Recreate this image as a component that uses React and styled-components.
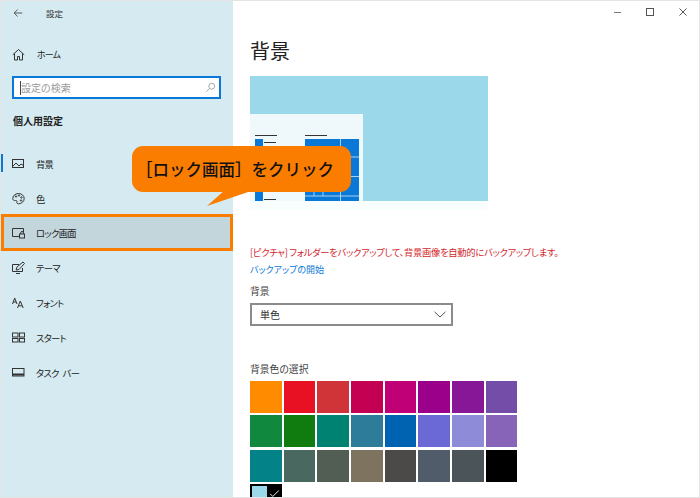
import React from "react";
import styled, { createGlobalStyle } from "styled-components";

const Global = createGlobalStyle`
  html, body { margin: 0; padding: 0; background: #fff; }
  body { font-family: "Noto Sans CJK JP", "Noto Sans", sans-serif; font-feature-settings: "palt"; }
  * { box-sizing: border-box; }
`;
const Window = styled.div`
  position: relative; width: 700px; height: 498px; overflow: hidden; background: #fff;
  border: 1px solid #e4e4e4; display: flex; color: #2b2b2b;
`;
const Sidebar = styled.aside`
  width: 232px; flex: none; background: #d5eaf1; display: flex; flex-direction: column;
`;
const TitleBar = styled.div`
  height: 23px; display: flex; align-items: center; padding-left: 12px; gap: 23px; font-size: 8.5px; color: #333;
`;
const HomeRow = styled.div`
  margin-top: 19px; height: 22px; display: flex; align-items: center; gap: 12px; padding-left: 11px; font-size: 9px;
  letter-spacing: -0.9px; color: #222;
`;
const SearchBox = styled.div`
  margin: 11px 0 0 11px; width: 209px; height: 23px; background: #fff; border: 2px solid #0a78d7;
  display: flex; align-items: center; justify-content: space-between; padding: 0 3px 0 6px; font-size: 10px; color: #9a9a9a;
  span { border-left: 1px solid #444; line-height: 14px; }
`;
const GroupTitle = styled.div`
  margin: 13px 0 16px 12px; height: 18px; line-height: 18px; font-size: 10px; font-weight: 700; color: #222;
`;
const NavList = styled.nav`
  display: flex; flex-direction: column;
`;
const NavRow = styled.div`
  position: relative; flex: none; height: ${p => (p.$hi ? 37 : 35)}px; margin: ${p => (p.$hi ? "-2px 0 -1px" : "0")};
  display: flex; align-items: center; gap: 11px; padding-left: ${p => (p.$hi ? 8 : 11)}px; font-size: 9.3px;
  letter-spacing: -0.7px; word-spacing: 2.5px; color: #222;
  background: ${p => (p.$hi ? "#c2d6dc" : "transparent")};
  border: ${p => (p.$hi ? "3px solid #fb7d00" : "0")};
  ${p => p.$current && `&::before { content: ""; position: absolute; left: 0; top: 8px; width: 2px; height: 18px; background: #0a78d7; }`}
`;
const Main = styled.main`
  flex: 1; padding: 30px 0 0 17px; display: flex; flex-direction: column; align-items: flex-start; min-width: 0;
  & > * { flex: none; }
`;
const WinControls = styled.div`
  position: absolute; top: 6px; right: 11px; display: flex; gap: 23px; align-items: center;
`;
const Heading = styled.h1`
  margin: -1px 0 0; font-size: 20px; font-weight: 400; line-height: 42px; height: 46px; color: #222;
`;
const Preview = styled.svg`
  display: block; width: 238px; height: 134px;
`;
const Warning = styled.p`
  margin: 34px 0 0; font-size: 9.3px; letter-spacing: -0.3px; line-height: 16px; color: #d3272c; white-space: nowrap;
`;
const LinkText = styled.a`
  margin-top: 2px; font-size: 9px; line-height: 16px; color: #0a78d7;
`;
const FieldLabel = styled.div`
  font-size: 9.8px; line-height: 16px; color: #444; margin-top: ${p => p.$top}px;
`;
const Select = styled.div`
  margin-top: 4px; width: 203px; height: 23px; border: 2px solid #8b8b8b; display: flex; align-items: center;
  justify-content: space-between; padding: 0 5px 0 8px; font-size: 10px; color: #333;
`;
const Swatches = styled.div`
  margin-top: 4px; display: grid; grid-template-columns: repeat(8, 31.5px); grid-auto-rows: 32.1px; gap: 2.2px;
`;
const Swatch = styled.div`
  background: ${p => p.$c};
`;
const SelectedSwatch = styled.div`
  background: #000; padding: 2px; display: grid; grid-template-columns: 15px 1fr;
  i { display: block; height: 100%; background: #9bd9ea; }
  svg { margin: 3px 0 0 2px; }
`;
const Callout = styled.div`
  position: absolute; left: 131px; top: 145px; width: 219px; height: 46px; background: #fb7d00; border-radius: 11px;
  display: flex; align-items: center; padding-left: 4px; font-size: 16.5px; font-weight: 500; color: #111; white-space: nowrap;
  font-feature-settings: normal;
`;
const CalloutTail = styled.svg`
  position: absolute; left: 70px; top: 44px; width: 60px; height: 20px;
`;

const Ico = ({ children, w = 13, h = 13 }) => (
  <svg width={w} height={h} viewBox="0 0 13 13" fill="none" stroke="#333" strokeWidth="1" style={{ flex: "none" }}>{children}</svg>
);

const icons = {
  image: <><rect x="0.5" y="2.5" width="11" height="8" /><path d="M1 9l3-3 3 3 2-2 3 2" /></>,
  color: <><path d="M6.5 1.5C3 1.5.8 4 .8 6.5c0 2 1.5 2.2 2.6 2 1.2-.2 1.8.4 1.5 1.5-.3 1.2.5 1.8 1.6 1.8 3 0 5.700-2.300 5.700-5.300 0-2.800-2.600-5-5.700-5z" /><circle cx="4" cy="4.500" r=".7" /><circle cx="7" cy="3.500" r=".7" /><circle cx="9.500" cy="5.500" r=".7" /><circle cx="9" cy="8.500" r=".7" /></>,
  lock: <><path d="M7 10.500H.5v-8h11v4" /><rect x="7.500" y="8" width="5" height="4" /><path d="M8.700 8V6.800a1.300 1.300 0 0 1 2.600 0V8" /></>,
  theme: <><path d="M7 3.500H.5v7h10V7" /><path d="M4 9l1-3 6-5 1.500 1.500-5.500 6z" /><path d="M4 12.500h4" /></>,
  font: <><path d="M.5 8l2.200-6L5 8M1.300 6h2.800" /><path d="M5.500 12l2.800-7 2.900 7M6.500 9.800h3.600" /></>,
  start: <><rect x=".5" y="2" width="5.500" height="4" /><rect x="7.500" y="2" width="5" height="4" /><rect x=".5" y="7.500" width="5.500" height="3.500" /><rect x="7.500" y="7.500" width="5" height="3.500" /></>,
  taskbar: <><rect x=".5" y="2.500" width="11.500" height="7.500" /><path d="M.5 8.500h11.500" strokeWidth="2" /></>,
};

const nav = [
  ["image", "背景", { $current: true }],
  ["color", "色"],
  ["lock", "ロック画面", { $hi: true }],
  ["theme", "テーマ"],
  ["font", "フォント"],
  ["start", "スタート"],
  ["taskbar", "タスク バー"],
];

const colors = [
  "#ff8c00", "#e81123", "#d13438", "#c30052", "#bf0077", "#9a0089", "#881798", "#744da9",
  "#10893e", "#107c10", "#008272", "#2d7d9a", "#0063b1", "#6b69d6", "#8e8cd8", "#8764b8",
  "#038387", "#486860", "#525e54", "#7e735f", "#4c4a48", "#515c6b", "#4a5459", "#000000",
];

export default function App() {
  return (
    <>
      <Global />
      <Window>
        <Sidebar>
          <TitleBar>
            <Ico w={10} h={10}><path d="M12 6.500H1.500M6 2L1.500 6.500 6 11" /></Ico>
            <span>設定</span>
          </TitleBar>
          <HomeRow>
            <Ico><path d="M.8 6.800L6.500 1.500l5.700 5.300M2.500 5.500v6.500h3V8.500h2V12h3V5.500" /></Ico>
            <span>ホーム</span>
          </HomeRow>
          <SearchBox>
            <span>設定の検索</span>
            <Ico w={11} h={11}><circle cx="8" cy="5" r="3.500" stroke="#999" /><path d="M5.500 7.500L1.500 11.500" stroke="#999" /></Ico>
          </SearchBox>
          <GroupTitle>個人用設定</GroupTitle>
          <NavList>
            {nav.map(([ic, label, p]) => (
              <NavRow key={label} {...p}>
                <Ico>{icons[ic]}</Ico>
                <span>{label}</span>
              </NavRow>
            ))}
          </NavList>
        </Sidebar>
        <Main>
          <Heading>背景</Heading>
          <Preview viewBox="0 0 238 134">
            <rect width="238" height="134" fill="#f8fdfe" />
            <rect width="238" height="125" fill="#9bd9ea" />
            <rect y="38" width="113" height="87" fill="#eff8fb" />
            <path d="M5 59.500h22M55 59.500h22M14 66.500h12M14 123.500h12" stroke="#333" strokeWidth="1" fill="none" />
            <rect x="5" y="63" width="8" height="62" fill="#0a78d7" />
            <rect x="55" y="63" width="54" height="62" fill="#0a78d7" />
            <path d="M90.500 63v62M55 81h54M55 100.500h54M55 120h54M64 100v20M73 100v20" stroke="#cfe8f6" strokeWidth=".8" fill="none" />
          </Preview>
          <Warning>[ピクチャ] フォルダーをバックアップして、背景画像を自動的にバックアップします。</Warning>
          <LinkText>バックアップの開始</LinkText>
          <FieldLabel $top={5}>背景</FieldLabel>
          <Select>
            <span>単色</span>
            <svg width="12" height="7" viewBox="0 0 12 7" fill="none" stroke="#555"><path d="M.5 .8L6 6l5.500-5.200" /></svg>
          </Select>
          <FieldLabel $top={35}>背景色の選択</FieldLabel>
          <Swatches>
            {colors.map(c => <Swatch key={c} $c={c} />)}
            <SelectedSwatch>
              <i />
              <svg width="11" height="9" viewBox="0 0 13 10" fill="none" stroke="#fff" strokeWidth="1.1"><path d="M1.500 5.500L4.500 8.500 11.500 1.500" /></svg>
            </SelectedSwatch>
          </Swatches>
        </Main>
        <WinControls>
          <svg width="10" height="10" viewBox="0 0 10 10" stroke="#777"><path d="M2 5.500h7" /></svg>
          <svg width="10" height="10" viewBox="0 0 10 10" fill="none" stroke="#555"><rect x="1.500" y="1.500" width="7" height="7" /></svg>
          <svg width="10" height="10" viewBox="0 0 10 10" stroke="#555"><path d="M1.500 1.500l7 7M8.500 1.500l-7 7" /></svg>
        </WinControls>
        <Callout>
          ［ロック画面］をクリック
          <CalloutTail viewBox="0 0 60 20"><polygon points="23,0 52,0 5,16" fill="#fb7d00" /></CalloutTail>
        </Callout>
      </Window>
    </>
  );
}
